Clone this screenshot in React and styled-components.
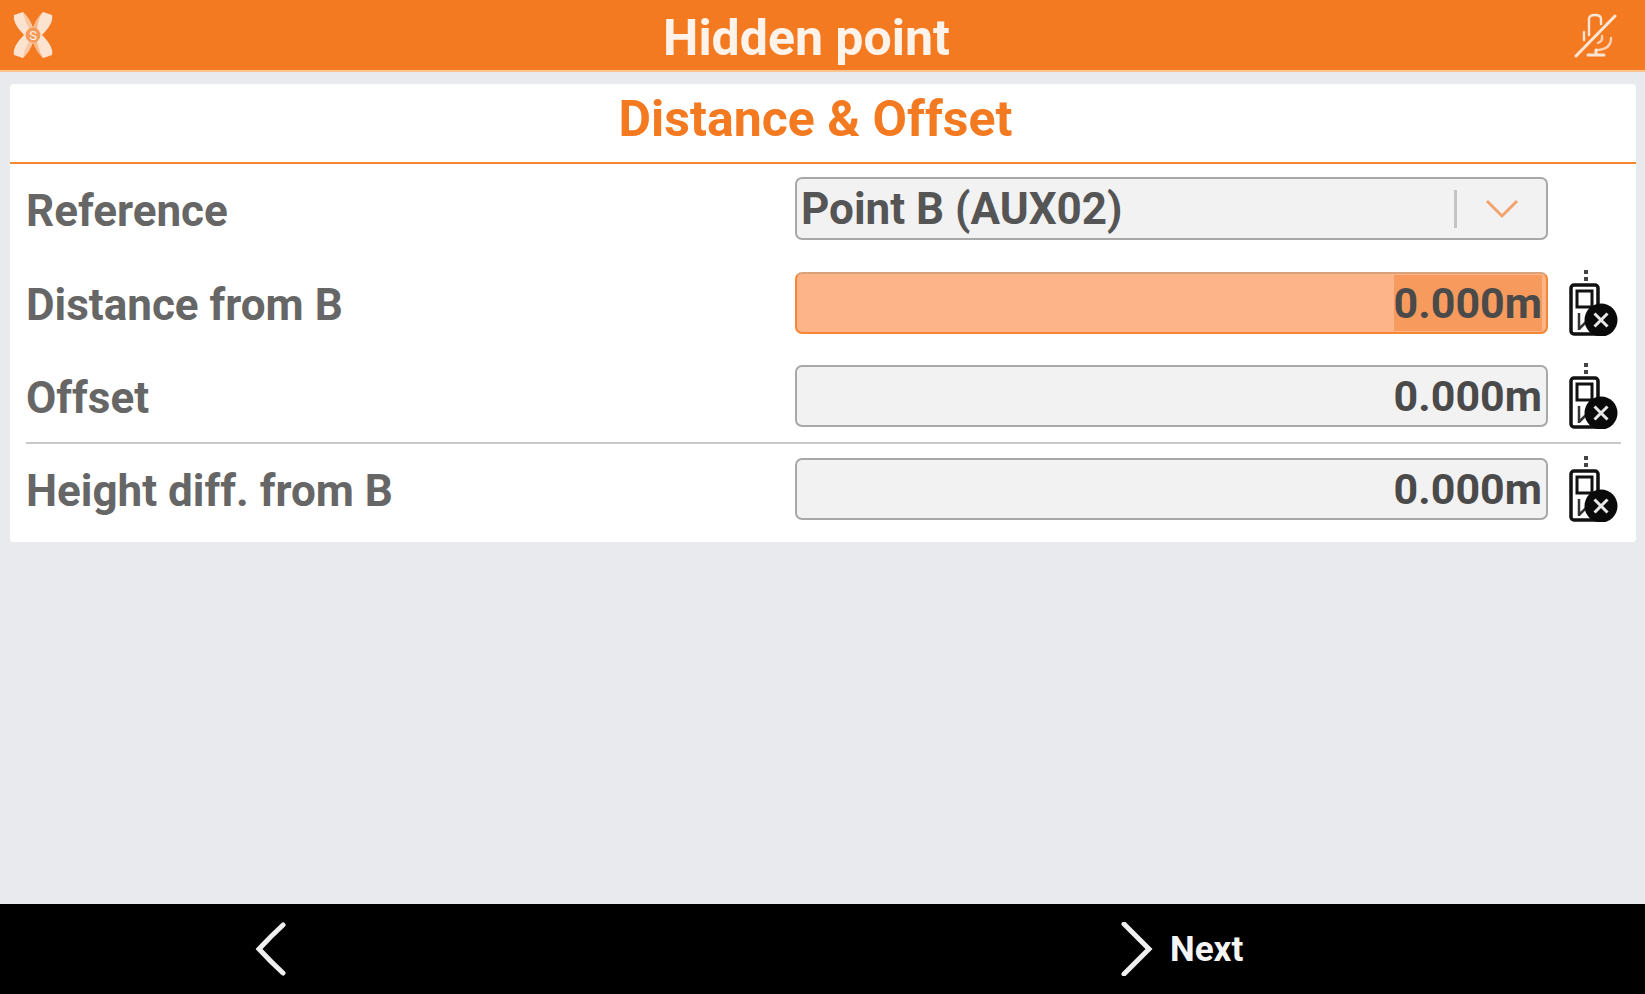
import React from 'react'
import styled, { createGlobalStyle } from 'styled-components';

const Global = createGlobalStyle`
  html, body {
    margin: 0;
    padding: 0;
    background: #E9EAEE;
    font-family: Roboto, "Liberation Sans", sans-serif;
  }
`

const Page = styled.div`
  width: 1645px;
  height: 994px;
  display: flex;
  flex-direction: column;
  background: #E9EAEE;
  overflow: hidden;
`

const Header = styled.div`
  height: 72px;
  flex-shrink: 0;
  background: #F47A22;
  border-bottom: 2px solid #FBC48F;
  display: grid;
  grid-template-columns: 1fr auto 1fr;
  align-items: center;
  padding: 0 28px 0 10px;
  box-sizing: border-box;
`

const HeaderTitle = styled.div`
  color: #FDF3EA;
  font-size: 50px;
  font-weight: 700;
  padding-top: 6px;
  padding-right: 14px;
`

const MicSlot = styled.div`
  display: flex;
  justify-content: flex-end;
`

const Content = styled.div`
  flex: 1;
  padding: 12px 9px 0 10px;
`

const Card = styled.div`
  background: #FFFFFF;
  border-radius: 4px;
  height: 458px;
  box-sizing: border-box;
`

const CardTitle = styled.div`
  height: 80px;
  box-sizing: border-box;
  border-bottom: 2px solid #F58634;
  color: #F47A22;
  font-size: 50px;
  font-weight: 700;
  display: flex;
  align-items: center;
  justify-content: center;
  padding: 0 15px 8px 0;
`

const Rows = styled.div`
  display: flex;
  flex-direction: column;
  padding: 13px 15px 0 16px;
`

const Row = styled.div`
  height: ${p => p.$height}px;
  display: grid;
  grid-template-columns: 769px 753px 1fr;
  align-items: start;
`

const Label = styled.div`
  color: #666666;
  font-size: 44px;
  font-weight: 700;
  line-height: 62px;
  padding-top: ${p => p.$top}px;
`

const Field = styled.div`
  height: 62px;
  box-sizing: border-box;
  border: 2px solid ${p => (p.$active ? '#F58634' : '#A8A8A8')};
  border-top-color: ${p => (p.$active ? '#D9A27A' : '#A8A8A8')};
  border-radius: 7px;
  background: ${p => (p.$active ? '#FCB488' : '#F2F2F2')};
  display: flex;
  align-items: center;
  justify-content: flex-end;
  padding-right: 4px;
  font-size: 43px;
  font-weight: 700;
  color: #4A4A4A;
`

const Selected = styled.span`
  background: ${p => (p.$active ? '#F79A5E' : 'transparent')};
  line-height: 56px;
`

const SelectBox = styled(Field)`
  height: 63px;
  justify-content: space-between;
  padding: 0 0 0 4px;
  font-size: 44px;
  color: #555555;
`

const SelectArrow = styled.div`
  display: flex;
  align-items: center;
  height: 38px;
  width: 92px;
  border-left: 3px solid #C4C4C4;
  justify-content: center;
  box-sizing: border-box;
`

const Divider = styled.div`
  height: 2px;
  background: #C9C9C9;
  margin-bottom: 14px;
`

const MeterSlot = styled.div`
  padding: 0 0 0 20px;
  margin-top: -2px;
`

const Footer = styled.div`
  height: 90px;
  flex-shrink: 0;
  background: #000000;
  display: flex;
  align-items: center;
  padding-left: 253px;
`

const NextButton = styled.div`
  display: flex;
  align-items: center;
  gap: 17px;
  margin-left: 834px;
  color: #F5F5F5;
  font-size: 35px;
  font-weight: 700;
`

const LogoIcon = () => (
  <svg width="46" height="48" viewBox="0 0 46 48">
    <path d="M4 4 L13 1 Q20 8 23 17 Q26 8 33 1 L42 4 Q44 12 32 24 Q44 36 42 44 L33 47 Q26 40 23 31 Q20 40 13 47 L4 44 Q2 36 14 24 Q2 12 4 3 Z" fill="#FCE3D0" />
    <path d="M13 1 Q20 8 23 17 L23 31 Q20 40 13 47 Q14 40 19 30 L19 18 Q14 8 13 1 Z" fill="#F9C7A2" />
    <path d="M33 1 Q26 8 23 17 L23 31 Q26 40 33 47 Q28 38 27 30 L27 18 Q28 8 33 1 Z" fill="#F7B78C" />
    <circle cx="23" cy="24" r="7.5" fill="#F59A5A" />
    <text x="23" y="29" fontSize="13" fontFamily="Roboto" fill="#FDF3EA" textAnchor="middle">S</text>
  </svg>
)

const MicOffIcon = () => (
  <svg width="44" height="46" viewBox="0 0 44 46" fill="none" stroke="#FBE6D5" strokeWidth="2.4" strokeLinecap="round">
    <path d="M16 23 V7 Q16 3 22 3 Q28 3 28 7 V12" />
    <path d="M11 20 V28" />
    <path d="M29 24 Q30 29 25 31 M38 26 Q38 38 23 38" stroke="#F9D2B4" />
    <path d="M23 38 V42 M15 43 H31" strokeWidth="3" />
    <path d="M3 44 L42 4" strokeWidth="3" />
  </svg>
)

const ChevronDown = () => (
  <svg width="34" height="22" viewBox="0 0 34 22" fill="none" stroke="#F2A46E" strokeWidth="3">
    <path d="M2 3 L17 18 L32 3" />
  </svg>
)

const MeterIcon = () => (
  <svg width="50" height="66" viewBox="0 0 50 66">
    <path d="M16 0 h4 v4 h-4 z M16 7 h4 v4 h-4 z" fill="#444" />
    <rect x="3" y="15" width="27" height="49" rx="3" fill="none" stroke="#111" strokeWidth="3.5" />
    <rect x="9" y="21" width="15" height="16" fill="none" stroke="#111" strokeWidth="3" />
    <path d="M11 43 V60 M11 59 L20 50" stroke="#333" strokeWidth="2.5" fill="none" />
    <circle cx="33" cy="50" r="16.5" fill="#0A0A0A" />
    <path d="M26.5 43.5 L39.5 56.5 M39.5 43.5 L26.5 56.5" stroke="#E8E8E8" strokeWidth="3" />
  </svg>
)

const ChevronLeft = () => (
  <svg width="34" height="54" viewBox="0 0 34 54" fill="none" stroke="#F0F0F0" strokeWidth="5" strokeLinecap="round">
    <path d="M30 3 Q18 14 6 27 Q18 40 30 51" />
  </svg>
)

const ChevronRight = () => (
  <svg width="32" height="54" viewBox="0 0 32 54" fill="none" stroke="#F0F0F0" strokeWidth="5" strokeLinecap="round">
    <path d="M3 2 Q15 14 28 27 Q15 40 3 52" />
  </svg>
)

const App = () => {
  return (
    <Page>
      <Global />
      <Header>
        <LogoIcon />
        <HeaderTitle>Hidden point</HeaderTitle>
        <MicSlot><MicOffIcon /></MicSlot>
      </Header>

      <Content>
        <Card>
          <CardTitle>Distance &amp; Offset</CardTitle>
          <Rows>
            <Row $height={95}>
              <Label $top={3}>Reference</Label>
              <SelectBox>
                Point B (AUX02)
                <SelectArrow><ChevronDown /></SelectArrow>
              </SelectBox>
            </Row>
            <Row $height={93}>
              <Label $top={2}>Distance from B</Label>
              <Field $active><Selected $active>0.000m</Selected></Field>
              <MeterSlot><MeterIcon /></MeterSlot>
            </Row>
            <Row $height={77}>
              <Label $top={2}>Offset</Label>
              <Field><Selected>0.000m</Selected></Field>
              <MeterSlot><MeterIcon /></MeterSlot>
            </Row>
            <Divider />
            <Row $height={62}>
              <Label $top={2}>Height diff. from B</Label>
              <Field><Selected>0.000m</Selected></Field>
              <MeterSlot><MeterIcon /></MeterSlot>
            </Row>
          </Rows>
        </Card>
      </Content>

      <Footer>
        <ChevronLeft />
        <NextButton>
          <ChevronRight />
          Next
        </NextButton>
      </Footer>
    </Page>
  )
}

export default App;
